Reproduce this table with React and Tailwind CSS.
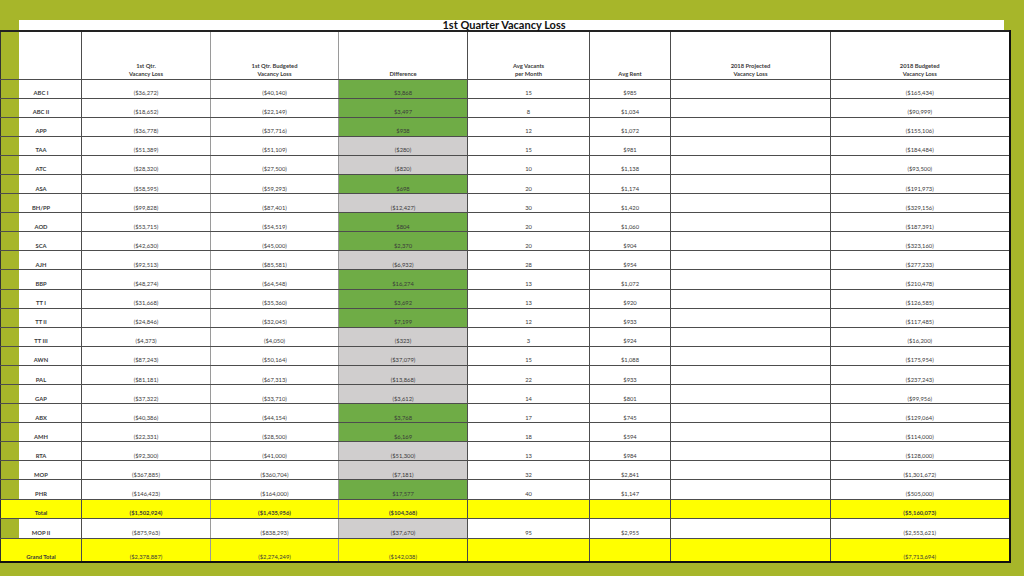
import React from 'react';

const rows = [
  ['ABC I', '($36,272)', '($40,140)', '$3,868', 'g', '15', '$985', '($165,434)'],
  ['ABC II', '($18,652)', '($22,149)', '$3,497', 'g', '8', '$1,034', '($90,999)'],
  ['APP', '($36,778)', '($37,716)', '$938', 'g', '12', '$1,072', '($155,106)'],
  ['TAA', '($51,389)', '($51,109)', '($280)', 's', '15', '$981', '($184,484)'],
  ['ATC', '($28,320)', '($27,500)', '($820)', 's', '10', '$1,138', '($93,500)'],
  ['ASA', '($58,595)', '($59,293)', '$698', 'g', '20', '$1,174', '($191,973)'],
  ['BH/PP', '($99,828)', '($87,401)', '($12,427)', 's', '30', '$1,420', '($329,156)'],
  ['AOD', '($53,715)', '($54,519)', '$804', 'g', '20', '$1,060', '($187,391)'],
  ['SCA', '($42,630)', '($45,000)', '$2,370', 'g', '20', '$904', '($323,160)'],
  ['AJH', '($92,513)', '($85,581)', '($6,932)', 's', '28', '$954', '($277,233)'],
  ['BBP', '($48,274)', '($64,548)', '$16,274', 'g', '13', '$1,072', '($210,478)'],
  ['TT I', '($31,668)', '($35,360)', '$3,692', 'g', '13', '$920', '($126,585)'],
  ['TT II', '($24,846)', '($32,045)', '$7,199', 'g', '12', '$933', '($117,485)'],
  ['TT III', '($4,373)', '($4,050)', '($323)', 's', '3', '$924', '($16,200)'],
  ['AWN', '($87,243)', '($50,164)', '($37,079)', 's', '15', '$1,088', '($175,954)'],
  ['PAL', '($81,181)', '($67,313)', '($13,868)', 's', '22', '$933', '($237,243)'],
  ['GAP', '($37,322)', '($33,710)', '($3,612)', 's', '14', '$801', '($99,956)'],
  ['ABX', '($40,386)', '($44,154)', '$3,768', 'g', '17', '$745', '($129,064)'],
  ['AMH', '($22,331)', '($28,500)', '$6,169', 'g', '18', '$594', '($114,000)'],
  ['RTA', '($92,300)', '($41,000)', '($51,300)', 's', '13', '$984', '($128,000)'],
  ['MOP', '($367,885)', '($360,704)', '($7,181)', 's', '32', '$2,841', '($1,301,672)'],
  ['PHR', '($146,423)', '($164,000)', '$17,577', 'g', '40', '$1,147', '($505,000)'],
];

const cell = 'border-b border-r border-[#4d4d4d] align-bottom text-center pb-[1.5px] leading-[6px] text-[5.8px] text-[#3a3a3a] p-0';

const DataRow = ({ r, h = 'h-[19.1px]' }) => {
  const diffBg = r[4] === 'g' ? 'bg-[#6fac46] text-[#1f3310]' : 'bg-[#d0cece]';
  return (
    <tr>
      <td className={`${cell} ${h} border-l border-l-[#333] font-bold text-[#1a1a1a]`}>{r[0]}</td>
      <td className={`${cell} border-r-[#9a9a9a]`}>{r[1]}</td>
      <td className={`${cell} border-r-[#9a9a9a] bg-white`}>{r[2]}</td>
      <td className={`${cell} ${diffBg}`}>{r[3]}</td>
      <td className={`${cell} bg-white`}>{r[5]}</td>
      <td className={`${cell} bg-white`}>{r[6]}</td>
      <td className={`${cell} bg-white`}></td>
      <td className={`${cell} bg-white border-r-2 border-r-[#111]`}>{r[7]}</td>
    </tr>
  );
};

const TotalRow = ({ label, vals, h, bold, last }) => {
  const y = `${cell} bg-[#ffff00] ${bold ? 'font-bold text-[#1a1a1a]' : ''} ${last ? 'border-b-2 border-b-[#111]' : ''}`;
  return (
    <tr>
      <td className={`${y} ${h} border-l border-l-[#333] font-bold text-[#1a1a1a]`}>{label}</td>
      <td className={`${y} border-r-[#9a9a9a]`}>{vals[0]}</td>
      <td className={`${y} border-r-[#9a9a9a]`}>{vals[1]}</td>
      <td className={y}>{vals[2]}</td>
      <td className={y}></td>
      <td className={y}></td>
      <td className={y}></td>
      <td className={`${y} border-r-2 border-r-[#111]`}>{vals[3]}</td>
    </tr>
  );
};

const headers = [
  '',
  ['1st Qtr.', 'Vacancy Loss'],
  ['1st Qtr. Budgeted', 'Vacancy Loss'],
  ['Difference'],
  ['Avg Vacants', 'per Month'],
  ['Avg Rent'],
  ['2018 Projected', 'Vacancy Loss'],
  ['2018 Budgeted', 'Vacancy Loss'],
];

export default function App() {
  return (
    <div className="min-h-screen w-full bg-[#a7b62a] pt-[20px] font-['Lato','Open_Sans',sans-serif]">
      <div className="w-[1024px] bg-[linear-gradient(to_right,#a7b62a_19px,#ffffff_19px,#ffffff_1004px,#a7b62a_1004px)]">
        <div className="w-[1008px] h-[10px] text-center text-[11px] leading-[10px] font-bold text-[#111]">
          1st Quarter Vacancy Loss
        </div>
        <table className="w-[1009px] table-fixed border-collapse">
          <colgroup>
            <col className="w-[81px]" />
            <col className="w-[129px]" />
            <col className="w-[128px]" />
            <col className="w-[129px]" />
            <col className="w-[122px]" />
            <col className="w-[81px]" />
            <col className="w-[160px]" />
            <col className="w-[179px]" />
          </colgroup>
          <thead>
            <tr>
              {headers.map((hd, i) => (
                <th
                  key={i}
                  className={`${cell} h-[48px] border-t-2 border-t-[#222] font-bold text-[#1a1a1a] leading-[7.5px] ${
                    i === 0 ? 'border-l border-l-[#333]' : 'bg-white'
                  } ${i === 1 || i === 2 ? 'border-r-[#9a9a9a]' : ''} ${i === 7 ? 'border-r-2 border-r-[#111]' : ''}`}
                >
                  {hd && hd.map((line, j) => <div key={j}>{line}</div>)}
                </th>
              ))}
            </tr>
          </thead>
          <tbody>
            {rows.map((r) => (
              <DataRow key={r[0]} r={r} />
            ))}
            <TotalRow label="Total" vals={['($1,502,924)', '($1,435,956)', '($104,368)', '($5,160,073)']} h="h-[19px]" bold />
            <DataRow r={['MOP II', '($875,963)', '($838,293)', '($37,670)', 's', '95', '$2,955', '($2,553,621)']} h="h-[20px]" />
            <TotalRow label="Grand Total" vals={['($2,378,887)', '($2,274,249)', '($142,038)', '($7,713,694)']} h="h-[24px]" last />
          </tbody>
        </table>
      </div>
    </div>
  );
}
